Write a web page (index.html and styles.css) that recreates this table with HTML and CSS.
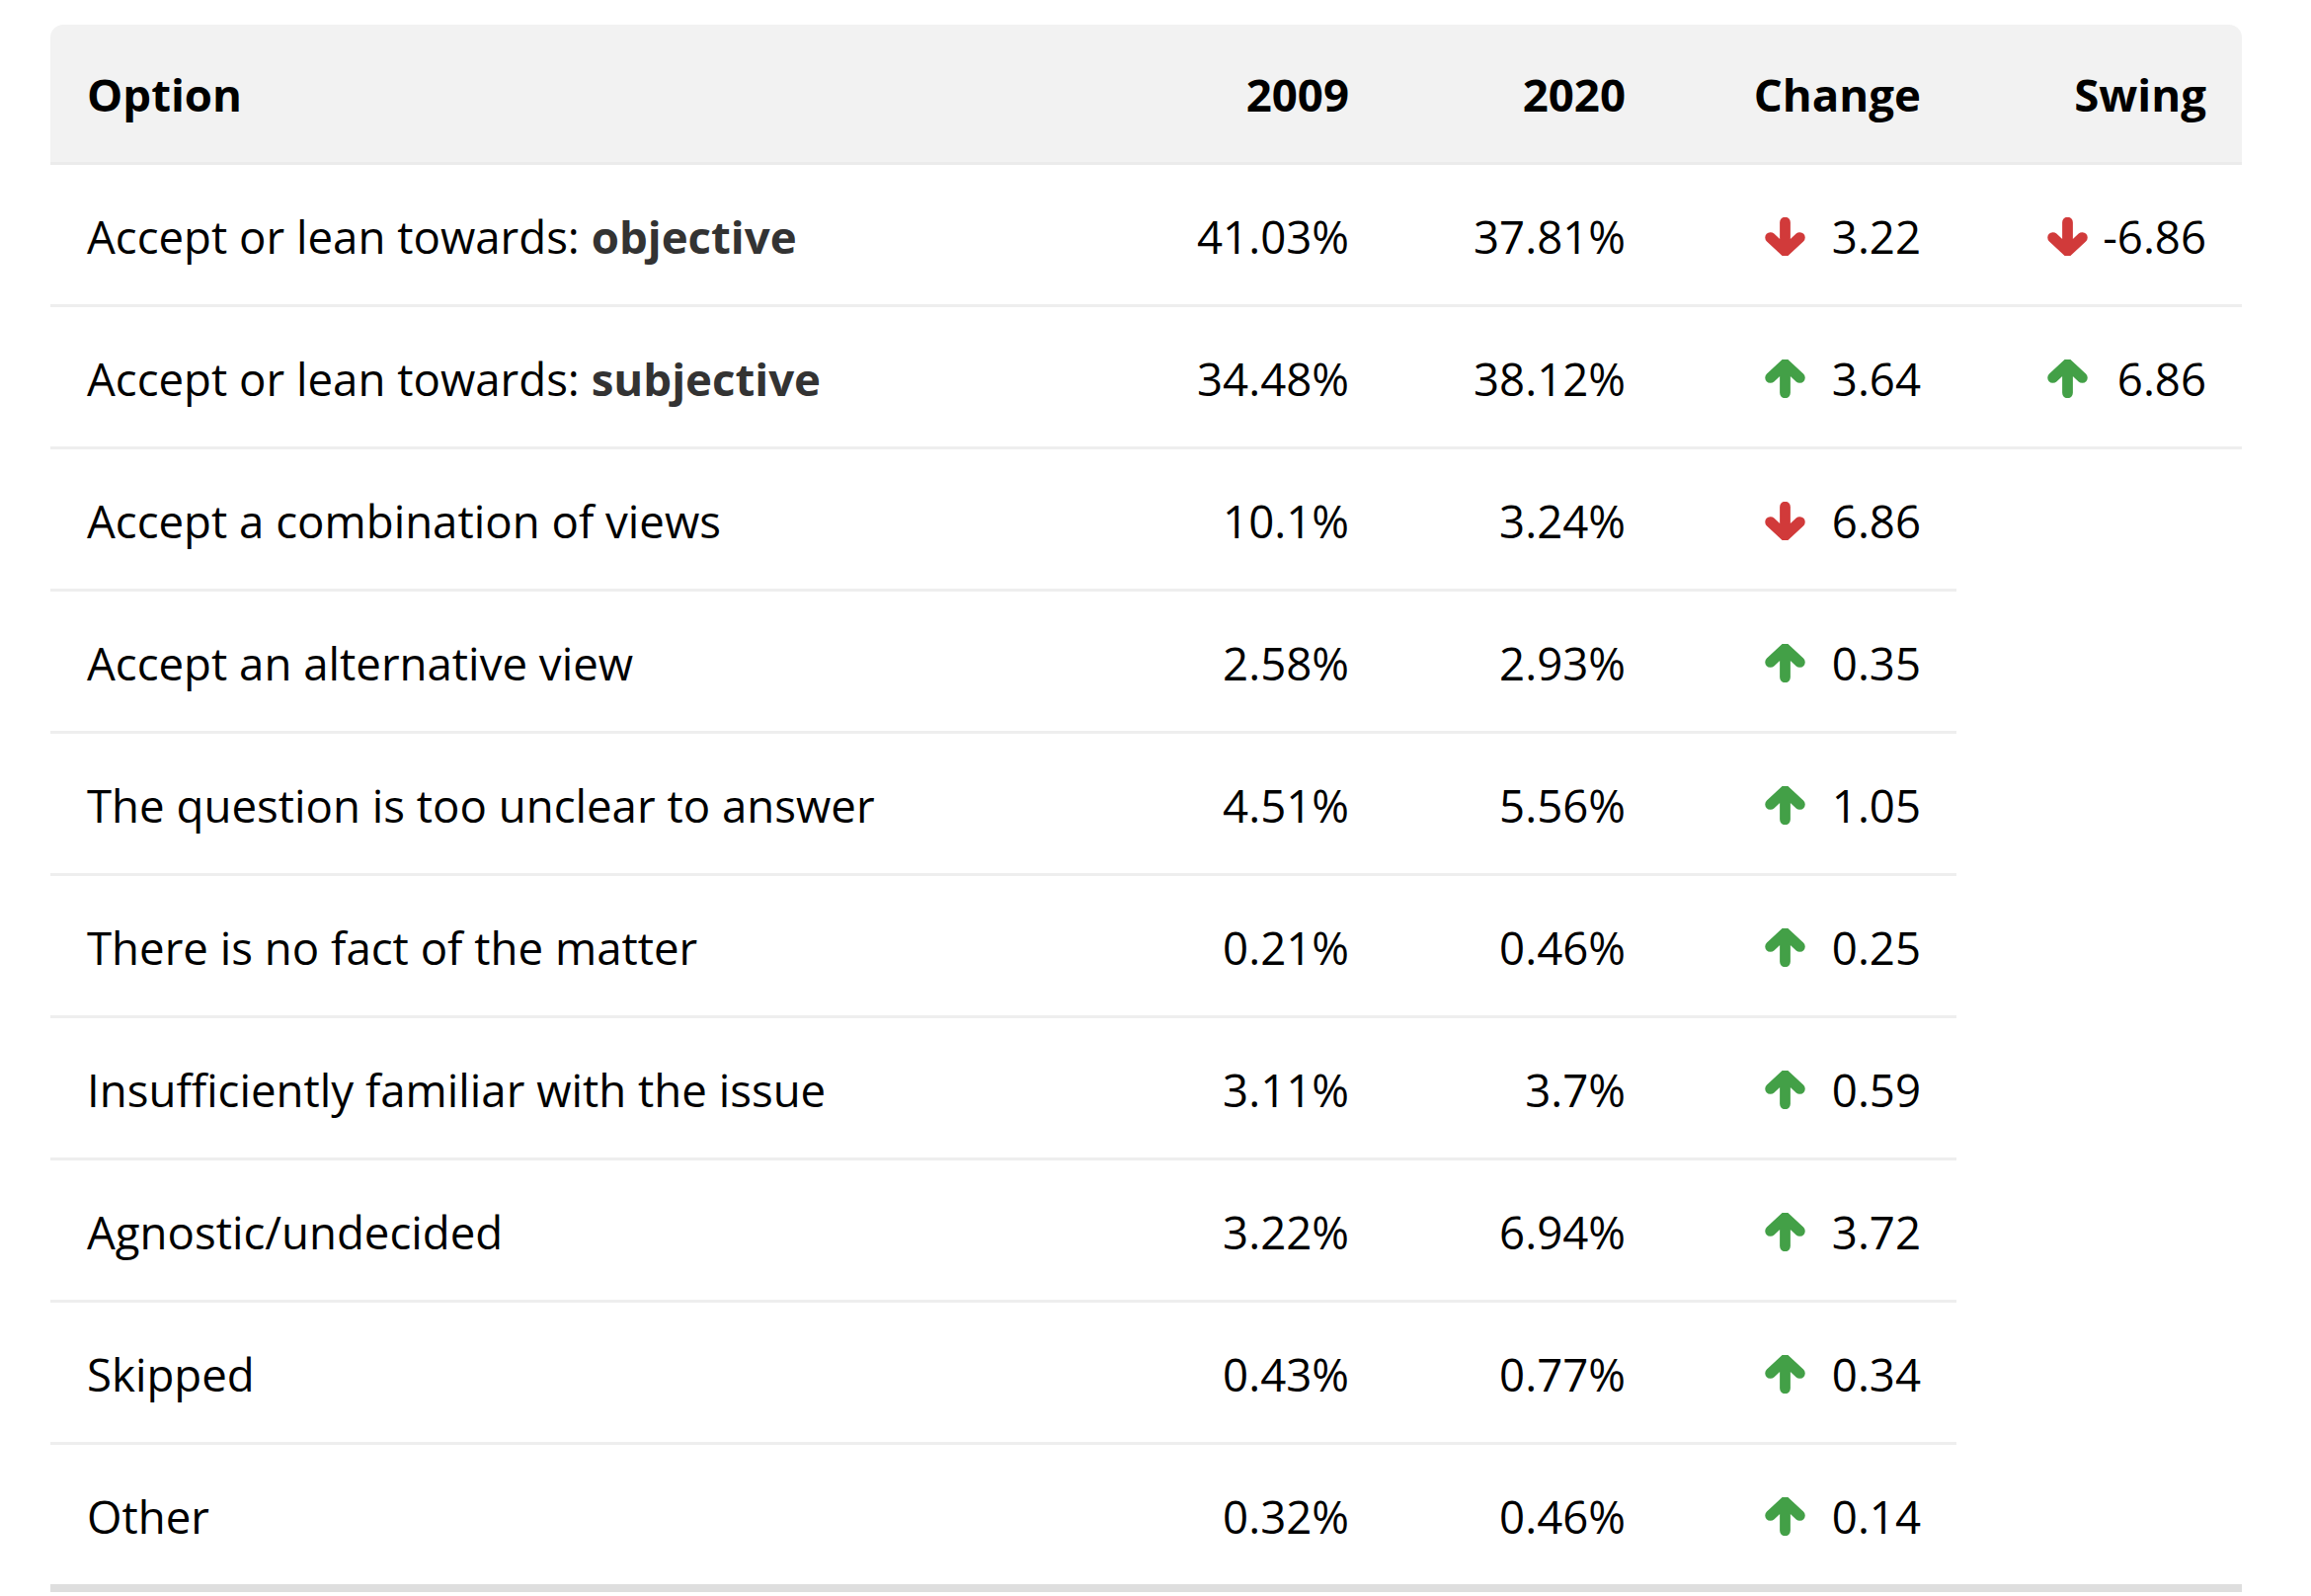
FILE: index.html
```html
<!DOCTYPE html>
<html>
<head>
<meta charset="utf-8">
<link rel="stylesheet" href="styles.css">
</head>
<body>
<svg width="0" height="0" class="defs">
  <defs>
    <symbol id="down" viewBox="0 0 40 38">
      <path d="M20 5V31M5.5 20L20 33.5L34.5 20" fill="none" stroke="currentColor" stroke-width="10.5" stroke-linecap="round" stroke-linejoin="miter"/>
    </symbol>
    <symbol id="up" viewBox="0 0 40 38">
      <path d="M20 33V7M5.5 18L20 4.5L34.5 18" fill="none" stroke="currentColor" stroke-width="10.5" stroke-linecap="round" stroke-linejoin="miter"/>
    </symbol>
  </defs>
</svg>
<table class="results">
  <colgroup>
    <col class="c-opt"><col class="c-num"><col class="c-num"><col class="c-chg"><col class="c-swing">
  </colgroup>
  <thead>
    <tr>
      <th class="opt">Option</th>
      <th>2009</th>
      <th>2020</th>
      <th>Change</th>
      <th>Swing</th>
    </tr>
  </thead>
  <tbody>
    <tr>
      <td class="opt">Accept or lean towards: <b>objective</b></td>
      <td>41.03%</td><td>37.81%</td>
      <td><span class="delta"><svg class="arrow down"><use href="#down"/></svg><span>3.22</span></span></td>
      <td><span class="delta wide"><svg class="arrow down"><use href="#down"/></svg><span>-6.86</span></span></td>
    </tr>
    <tr>
      <td class="opt">Accept or lean towards: <b>subjective</b></td>
      <td>34.48%</td><td>38.12%</td>
      <td><span class="delta"><svg class="arrow up"><use href="#up"/></svg><span>3.64</span></span></td>
      <td><span class="delta wide"><svg class="arrow up"><use href="#up"/></svg><span>6.86</span></span></td>
    </tr>
    <tr>
      <td class="opt">Accept a combination of views</td>
      <td>10.1%</td><td>3.24%</td>
      <td><span class="delta"><svg class="arrow down"><use href="#down"/></svg><span>6.86</span></span></td>
    </tr>
    <tr>
      <td class="opt">Accept an alternative view</td>
      <td>2.58%</td><td>2.93%</td>
      <td><span class="delta"><svg class="arrow up"><use href="#up"/></svg><span>0.35</span></span></td>
    </tr>
    <tr>
      <td class="opt">The question is too unclear to answer</td>
      <td>4.51%</td><td>5.56%</td>
      <td><span class="delta"><svg class="arrow up"><use href="#up"/></svg><span>1.05</span></span></td>
    </tr>
    <tr>
      <td class="opt">There is no fact of the matter</td>
      <td>0.21%</td><td>0.46%</td>
      <td><span class="delta"><svg class="arrow up"><use href="#up"/></svg><span>0.25</span></span></td>
    </tr>
    <tr>
      <td class="opt">Insufficiently familiar with the issue</td>
      <td>3.11%</td><td>3.7%</td>
      <td><span class="delta"><svg class="arrow up"><use href="#up"/></svg><span>0.59</span></span></td>
    </tr>
    <tr>
      <td class="opt">Agnostic/undecided</td>
      <td>3.22%</td><td>6.94%</td>
      <td><span class="delta"><svg class="arrow up"><use href="#up"/></svg><span>3.72</span></span></td>
    </tr>
    <tr>
      <td class="opt">Skipped</td>
      <td>0.43%</td><td>0.77%</td>
      <td><span class="delta"><svg class="arrow up"><use href="#up"/></svg><span>0.34</span></span></td>
    </tr>
    <tr class="last">
      <td class="opt">Other</td>
      <td>0.32%</td><td>0.46%</td>
      <td><span class="delta"><svg class="arrow up"><use href="#up"/></svg><span>0.14</span></span></td>
    </tr>
  </tbody>
</table>
</body>
</html>
```
FILE: styles.css
```css
html, body {
  margin: 0;
  padding: 0;
  background: #ffffff;
}

body {
  font-family: "Open Sans", "Noto Sans", sans-serif;
  color: #000;
}

.defs {
  position: absolute;
  width: 0;
  height: 0;
  overflow: hidden;
}

.results {
  margin: 25px 0 0 51px;
  width: 2219px;
  table-layout: fixed;
  border-collapse: separate;
  border-spacing: 0;
  border-bottom: 8px solid #dedede;
  font-size: 45.6px;
}

.c-opt { width: 1071px; }
.c-num { width: 280px; }
.c-chg { width: 299px; }
.c-swing { width: 289px; }

.results th {
  background: #f2f2f2;
  font-weight: 700;
  color: #000;
  text-align: right;
  line-height: 60px;
  padding: 40px 36px 39px 37px;
  border-bottom: 3px solid #ebebeb;
  white-space: nowrap;
}

.results th.opt {
  text-align: left;
  border-top-left-radius: 13px;
}

.results th:last-child {
  border-top-right-radius: 13px;
}

.results td {
  text-align: right;
  line-height: 60px;
  padding: 42px 36px 39px 37px;
  border-bottom: 3px solid #eeeeee;
  white-space: nowrap;
  color: #000;
}

.results td.opt {
  text-align: left;
}

.results td b {
  font-weight: 700;
  color: #333;
}

.results tr.last td {
  border-bottom: none;
}

.delta {
  display: inline-flex;
  align-items: center;
  justify-content: space-between;
  width: 158px;
  vertical-align: top;
}

.delta.wide {
  width: 161px;
}

.arrow {
  width: 41px;
  height: 39px;
  flex: none;
}

.arrow.down { color: #d13a3a; }
.arrow.up { color: #43a047; }
```
